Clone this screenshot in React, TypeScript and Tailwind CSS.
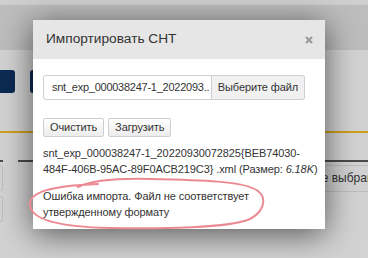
export default function App() {
  return (
    <div className="relative w-[368px] h-[258px] overflow-hidden bg-[#d2d2d2] font-['Liberation_Sans',Arial,sans-serif] text-[#333]">
      {/* page under the overlay */}
      <div className="h-[5px] bg-[#cfcfcf]" />
      <div className="h-[45px] bg-[#bdbdbd]" />
      <div className="mt-[20px] flex h-[23px] gap-[15px]">
        <div className="w-[15px] rounded-r-[3px] bg-[#0c2a52]" />
        <div className="w-[40px] rounded-[3px] bg-[#0c2a52]" />
      </div>
      <div className="mt-[38px] h-[2px] bg-[#cf9f1d]" />
      <div className="mt-[27px] flex h-[2px] justify-between">
        <div className="flex gap-[15px]">
          <div className="w-[3px] bg-[#4a4a4a]" />
          <div className="w-[30px] bg-[#4a4a4a]" />
        </div>
        <div className="w-[60px] bg-[#4a4a4a]" />
      </div>
      <div className="mt-[3px] flex justify-between">
        <div className="flex flex-col gap-[5px]">
          <div className="h-[26px] w-[3px] rounded-r-[3px] border border-l-0 border-[#bdbdbd]" />
          <div className="h-[26px] w-[3px] rounded-r-[3px] border border-l-0 border-[#bdbdbd]" />
        </div>
        <div className="h-[27px] w-[88px] border border-r-0 border-[#bdbdbd] pl-[32px] text-[12px] leading-[25px] whitespace-nowrap">
          Не выбрано
        </div>
      </div>

      {/* modal */}
      <div className="absolute left-[33px] top-[20px] w-[292px] bg-white shadow-[0_5px_30px_rgba(0,0,0,0.6)]">
        <div className="flex h-[39px] items-center justify-between bg-[#e6e6e6] pl-[13px] pr-[12px]">
          <span className="text-[13.7px] text-[#333]">Импортировать СНТ</span>
          <svg width="8" height="8" viewBox="0 0 8 8">
            <path d="M1 1 L7 7 M7 1 L1 7" stroke="#9a9a9a" strokeWidth="2.2" />
          </svg>
        </div>
        <div className="px-[10px] pt-[16px] pb-[9px] text-[11px] tracking-[-0.1px]">
          <div className="flex h-[25px] w-[262px]">
            <div className="flex w-[169px] items-center overflow-hidden whitespace-nowrap rounded-l-[3px] border border-[#cfcfcf] pl-[8px] tracking-[-0.25px]">
              snt_exp_000038247-1_2022093..
            </div>
            <div className="flex flex-1 items-center justify-center rounded-r-[3px] border border-l-0 border-[#cfcfcf] bg-[#f1f1f1]">
              Выберите файл
            </div>
          </div>
          <div className="mt-[18px] flex gap-[4px]">
            <button className="h-[19px] rounded-[2px] border border-[#cfcfcf] bg-gradient-to-b from-white to-[#ececec] px-[6px] leading-[17px]">
              Очистить
            </button>
            <button className="h-[19px] rounded-[2px] border border-[#cfcfcf] bg-gradient-to-b from-white to-[#ececec] px-[6px] leading-[17px]">
              Загрузить
            </button>
          </div>
          <p className="mt-[8px] whitespace-nowrap leading-[16px]">
            snt_exp_000038247-1_20220930072825{"{"}BEB74030-
            <br />
            484F-406B-95AC-89F0ACB219C3{"}"} .xml (Размер: <i>6.18K</i>)
          </p>
          <p className="mt-[11px] whitespace-nowrap leading-[16px]">
            Ошибка импорта. Файл не соответствует
            <br />
            утвержденному формату
          </p>
        </div>
      </div>

      {/* hand-drawn red mark */}
      <svg className="pointer-events-none absolute left-0 top-0" width="368" height="258" viewBox="0 0 368 258">
        <path
          d="M78 187 C 90 181, 110 178, 150 179 C 200 180, 245 181, 258 191 C 268 199, 263 212, 250 219 C 230 228, 160 229, 110 228 C 60 227, 31 220, 30 205 C 29 192, 50 186, 98 184"
          fill="none"
          stroke="#ec8a94"
          strokeWidth="2"
          strokeLinecap="round"
        />
      </svg>
    </div>
  );
}
